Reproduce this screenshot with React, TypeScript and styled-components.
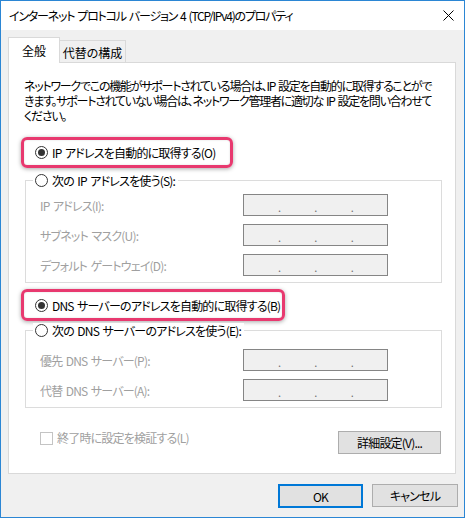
import styled, { createGlobalStyle } from "styled-components";

const GlobalStyle = createGlobalStyle`
  html, body {
    margin: 0;
    padding: 0;
    background: #fff;
  }
  * {
    box-sizing: border-box;
  }
`;

const Window = styled.div`
  width: 465px;
  height: 518px;
  border: 1px solid #2b86d4;
  background: #f0f0f0;
  display: flex;
  flex-direction: column;
  font-family: "Noto Sans CJK JP", "Noto Sans", sans-serif;
  font-size: 12px;
  font-feature-settings: "palt";
  letter-spacing: -0.8px;
  word-spacing: 1.5px;
  color: #000;
  overflow: hidden;
`;

const TitleBar = styled.div`
  height: 29px;
  flex-shrink: 0;
  background: #fff;
  display: flex;
  align-items: center;
  justify-content: space-between;
  padding: 0 10px 0 8px;
`;

const Title = styled.span`
  white-space: nowrap;
  letter-spacing: -1.2px;
`;

const Body = styled.div`
  flex: 1;
  display: flex;
  flex-direction: column;
  padding: 7px 8px 0 7px;
`;

const TabStrip = styled.div`
  display: flex;
  align-items: flex-end;
  height: 25px;
  position: relative;
  z-index: 1;
`;

const Tab = styled.div<{ $active?: boolean; $width: number }>`
  width: ${(p) => p.$width}px;
  height: ${(p) => (p.$active ? 26 : 22)}px;
  margin-bottom: ${(p) => (p.$active ? -1 : 0)}px;
  background: ${(p) => (p.$active ? "#fff" : "#f0f0f0")};
  border: 1px solid #d9d9d9;
  border-bottom: none;
  ${(p) => (p.$active ? "" : "border-left: none;")}
  display: flex;
  align-items: center;
  justify-content: center;
  letter-spacing: 0;
  padding-top: ${(p) => (p.$active ? 0 : 1)}px;
`;

const Panel = styled.div`
  height: 412px;
  background: #fff;
  border: 1px solid #d9d9d9;
  display: flex;
  flex-direction: column;
  padding-top: 15px;
`;

const Description = styled.p`
  margin: 0 0 0 15px;
  line-height: 15px;
  white-space: nowrap;
  letter-spacing: -1.25px;
`;

const Highlight = styled.div<{ $width: number; $height: number; $top: number }>`
  width: ${(p) => p.$width}px;
  height: ${(p) => p.$height}px;
  margin: ${(p) => p.$top}px 0 0 12px;
  border: 3px solid #e8396f;
  border-radius: 6px;
  box-shadow: 0 1px 4px rgba(0, 0, 0, 0.35), inset 0 0 2px rgba(0, 0, 0, 0.15);
  display: flex;
  align-items: center;
  padding-left: 11px;
`;

const RadioLabel = styled.label`
  display: flex;
  align-items: center;
  gap: 4px;
  white-space: nowrap;
  line-height: 15px;
`;

const RadioCircle = styled.span<{ $checked?: boolean }>`
  width: 13px;
  height: 13px;
  flex-shrink: 0;
  border: 1px solid #333;
  border-radius: 50%;
  background: #fff;
  display: flex;
  align-items: center;
  justify-content: center;
  &::after {
    content: "";
    width: 7px;
    height: 7px;
    border-radius: 50%;
    background: ${(p) => (p.$checked ? "#333" : "transparent")};
  }
`;

const GroupBox = styled.div<{ $top: number; $rowsTop: number }>`
  margin: ${(p) => p.$top}px 13px 0 16px;
  border: 1px solid #dcdcdc;
  padding-bottom: 6px;
  display: flex;
  flex-direction: column;

  & > .rows {
    margin-top: ${(p) => p.$rowsTop}px;
  }
`;

const Legend = styled.div`
  margin: -8px 0 0 7px;
  padding: 0 3px 0 2px;
  background: #fff;
  width: fit-content;
  height: 15px;
`;

const Rows = styled.div`
  display: flex;
  flex-direction: column;
  gap: 8px;
  padding-left: 14px;
`;

const FieldRow = styled.div`
  display: grid;
  grid-template-columns: 203px 145px;
  align-items: center;
`;

const FieldLabel = styled.span`
  color: #a0a0a0;
  white-space: nowrap;
`;

const IpBox = styled.div`
  height: 22px;
  background: #f0f0f0;
  border: 1px solid #858585;
  display: flex;
  justify-content: space-evenly;
  align-items: center;
  color: #707070;
  font-size: 11px;
  padding-top: 3px;
`;

const BottomRow = styled.div`
  display: flex;
  justify-content: space-between;
  align-items: flex-start;
  margin: 23px 14px 0 31px;
`;

const CheckLabel = styled.label`
  display: flex;
  align-items: center;
  gap: 4px;
  color: #a0a0a0;
  line-height: 14px;
`;

const CheckBox = styled.span`
  width: 13px;
  height: 13px;
  border: 1px solid #c4c4c4;
  background: #fff;
`;

const Button = styled.button<{ $width: number; $default?: boolean }>`
  width: ${(p) => p.$width}px;
  height: ${(p) => (p.$default ? 24 : 23)}px;
  background: #e1e1e1;
  border: ${(p) => (p.$default ? "2px solid #0078d7" : "1px solid #adadad")};
  font: inherit;
  letter-spacing: inherit;
  color: #000;
  padding: 0;
`;

const Footer = styled.div`
  display: flex;
  justify-content: flex-end;
  gap: 9px;
  margin: 10px -2px 0 0;
`;

function CloseIcon() {
  return (
    <svg width="11" height="11" viewBox="0 0 11 11">
      <path d="M0.5 0.5 L10.5 10.5 M10.5 0.5 L0.5 10.5" stroke="#000" strokeWidth="1" fill="none" />
    </svg>
  );
}

function Radio({ checked, label }: { checked?: boolean; label: string }) {
  return (
    <RadioLabel>
      <RadioCircle $checked={checked} />
      <span>{label}</span>
    </RadioLabel>
  );
}

function IpField({ label }: { label: string }) {
  return (
    <FieldRow>
      <FieldLabel>{label}</FieldLabel>
      <IpBox>
        <span>.</span>
        <span>.</span>
        <span>.</span>
      </IpBox>
    </FieldRow>
  );
}

export default function App() {
  return (
    <>
      <GlobalStyle />
      <Window>
        <TitleBar>
          <Title>インターネット プロトコル バージョン 4 (TCP/IPv4)のプロパティ</Title>
          <CloseIcon />
        </TitleBar>
        <Body>
          <TabStrip>
            <Tab $active $width={52}>全般</Tab>
            <Tab $width={66}>代替の構成</Tab>
          </TabStrip>
          <Panel>
            <Description>
              ネットワークでこの機能がサポートされている場合は、IP 設定を自動的に取得することがで
              <br />
              きます。サポートされていない場合は、ネットワーク管理者に適切な IP 設定を問い合わせて
              <br />
              ください。
            </Description>

            <Highlight $width={212} $height={31} $top={14}>
              <Radio checked label="IP アドレスを自動的に取得する(O)" />
            </Highlight>

            <GroupBox $top={12} $rowsTop={6}>
              <Legend>
                <Radio label="次の IP アドレスを使う(S):" />
              </Legend>
              <Rows className="rows">
                <IpField label="IP アドレス(I):" />
                <IpField label="サブネット マスク(U):" />
                <IpField label="デフォルト ゲートウェイ(D):" />
              </Rows>
            </GroupBox>

            <Highlight $width={264} $height={32} $top={6}>
              <Radio checked label="DNS サーバーのアドレスを自動的に取得する(B)" />
            </Highlight>

            <GroupBox $top={9} $rowsTop={11}>
              <Legend>
                <Radio label="次の DNS サーバーのアドレスを使う(E):" />
              </Legend>
              <Rows className="rows">
                <IpField label="優先 DNS サーバー(P):" />
                <IpField label="代替 DNS サーバー(A):" />
              </Rows>
            </GroupBox>

            <BottomRow>
              <CheckLabel>
                <CheckBox />
                <span>終了時に設定を検証する(L)</span>
              </CheckLabel>
              <Button $width={103}>詳細設定(V)...</Button>
            </BottomRow>
          </Panel>
          <Footer>
            <Button $width={85} $default>OK</Button>
            <Button $width={86}>キャンセル</Button>
          </Footer>
        </Body>
      </Window>
    </>
  );
}
